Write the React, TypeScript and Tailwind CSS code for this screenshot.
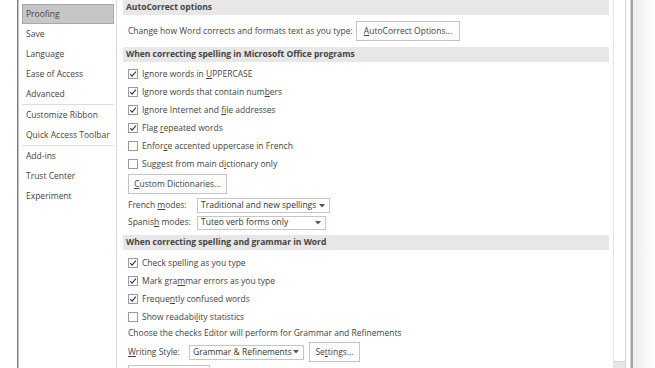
import type { ReactNode } from "react";

const navTop = ["Proofing", "Save", "Language", "Ease of Access", "Advanced"];
const navMid = ["Customize Ribbon", "Quick Access Toolbar"];
const navBottom = ["Add-ins", "Trust Center", "Experiment"];

function NavItem({ label, selected }: { label: string; selected?: boolean }) {
  if (selected) {
    return (
      <div className="h-[20px] flex items-center pl-[3px] bg-[#c6c6c6] border border-[#a9a9a9]">
        {label}
      </div>
    );
  }
  return <div className="h-[20px] flex items-center pl-[4px]">{label}</div>;
}

function Header({ children }: { children: ReactNode }) {
  return (
    <div className="h-[15px] flex items-center pl-[3px] bg-[#e7e7e7] font-bold text-[#444]">
      {children}
    </div>
  );
}

function Check({ checked, children }: { checked?: boolean; children: ReactNode }) {
  return (
    <div className="h-[18px] flex items-center">
      <span className="w-[10px] h-[10px] border border-[#9a9a9a] bg-white flex items-center justify-center shrink-0">
        {checked && (
          <svg width="8" height="8" viewBox="0 0 8 8">
            <path d="M1.2 4.2 L3.1 6.1 L6.9 1.6" fill="none" stroke="#333" strokeWidth="1.1" />
          </svg>
        )}
      </span>
      <span className="ml-[4px]">{children}</span>
    </div>
  );
}

function Button({ width, children }: { width: string; children: ReactNode }) {
  return (
    <div
      className={`h-[20px] ${width} shrink-0 flex items-center justify-center border border-[#c4c4c4] bg-[#fdfdfd]`}
    >
      {children}
    </div>
  );
}

function Select({ width, height, children }: { width: string; height: string; children: ReactNode }) {
  return (
    <div
      className={`${width} ${height} shrink-0 flex items-center justify-between pl-[3px] pr-[4px] border border-[#c6c6c6] bg-white text-[#333]`}
    >
      <span>{children}</span>
      <svg width="6" height="4" viewBox="0 0 6 4">
        <path d="M0 0 H6 L3 3.5 Z" fill="#555" />
      </svg>
    </div>
  );
}

export default function App() {
  return (
    <div className="w-[655px] h-[368px] bg-white overflow-hidden flex font-['Open_Sans',sans-serif] text-[8.5px] text-[#444] leading-none">
      <div className="w-[17px] shrink-0" />
      {/* window */}
      <div className="w-[616px] shrink-0 h-full flex">
        <div className="w-px bg-[#7c7c7c]" />
        <div className="w-px bg-[#c2c2c2]" />

        {/* left nav */}
        <div className="w-[98px] shrink-0 h-full border-r border-[#dadada] pt-[4px] pl-[3px] pr-[2px]">
          {navTop.map((n, i) => (
            <NavItem key={n} label={n} selected={i === 0} />
          ))}
          <div className="h-px bg-[#dcdcdc]" />
          {navMid.map((n) => (
            <NavItem key={n} label={n} />
          ))}
          <div className="h-px bg-[#dcdcdc]" />
          {navBottom.map((n) => (
            <NavItem key={n} label={n} />
          ))}
        </div>

        {/* content */}
        <div className="w-[496px] shrink-0 h-full pl-[6px] pr-[4px]">
          <Header>AutoCorrect options</Header>
          <div className="mt-[6px] h-[20px] flex items-center pl-[5px]">
            <span className="w-[228px] shrink-0">Change how Word corrects and formats text as you type:</span>
            <Button width="w-[104px]">
              <span>
                <u>A</u>utoCorrect Options...
              </span>
            </Button>
          </div>

          <div className="mt-[6px]">
            <Header>When correcting spelling in Microsoft Office programs</Header>
          </div>
          <div className="mt-[3px] pl-[5px]">
            <Check checked>
              Ignore words in <u>U</u>PPERCASE
            </Check>
            <Check checked>
              Ignore words that contain num<u>b</u>ers
            </Check>
            <Check checked>
              Ignore Internet and <u>f</u>ile addresses
            </Check>
            <Check checked>
              Flag <u>r</u>epeated words
            </Check>
            <Check>
              Enfor<u>c</u>e accented uppercase in French
            </Check>
            <Check>
              Suggest from main d<u>i</u>ctionary only
            </Check>
            <div className="mt-[1px]">
              <Button width="w-[99px]">
                <span>
                  <u>C</u>ustom Dictionaries...
                </span>
              </Button>
            </div>
            <div className="mt-[3px] h-[17px] flex items-center">
              <span className="w-[69px] shrink-0">
                French <u>m</u>odes:
              </span>
              <Select width="w-[133px]" height="h-[15px]">
                Traditional and new spellings
              </Select>
            </div>
            <div className="h-[17px] flex items-center">
              <span className="w-[69px] shrink-0">
                Spanis<u>h</u> modes:
              </span>
              <Select width="w-[129px]" height="h-[14px]">
                Tuteo verb forms only
              </Select>
            </div>
          </div>

          <div className="mt-[4px]">
            <Header>When correcting spelling and grammar in Word</Header>
          </div>
          <div className="mt-[4px] pl-[5px]">
            <Check checked>Check spelling as you type</Check>
            <Check checked>
              Mark gra<u>m</u>mar errors as you type
            </Check>
            <Check checked>
              Freque<u>n</u>tly confused words
            </Check>
            <Check>
              Show readabi<u>l</u>ity statistics
            </Check>
            <div className="h-[15px] flex items-center">
              Choose the checks Editor will perform for Grammar and Refinements
            </div>
            <div className="mt-[1px] h-[20px] flex items-center">
              <span className="w-[61px] shrink-0">
                <u>W</u>riting Style:
              </span>
              <Select width="w-[115px]" height="h-[15px]">
                Grammar &amp; Refinements
              </Select>
              <div className="ml-[5px]">
                <Button width="w-[51px]">
                  <span>
                    Se<u>t</u>tings...
                  </span>
                </Button>
              </div>
            </div>
            <div className="mt-[3px]">
              <Button width="w-[82px]">
                <span />
              </Button>
            </div>
          </div>
        </div>

        {/* scrollbar */}
        <div className="w-[13px] shrink-0 h-full flex flex-col border-l border-[#e4e4e4] border-r border-r-[#d2d2d2]">
          <div className="flex-1 bg-white" />
          <div className="h-[7px] bg-[#e8e8e8] border-t border-[#d8d8d8]" />
        </div>
        <div className="w-[4px] shrink-0 bg-white" />
        <div className="w-px bg-[#cfcfcf]" />
        <div className="w-[2px] bg-[#a4a4a4]" />
      </div>
      <div className="flex-1 bg-gradient-to-r from-[#ededed] to-white" />
    </div>
  );
}
